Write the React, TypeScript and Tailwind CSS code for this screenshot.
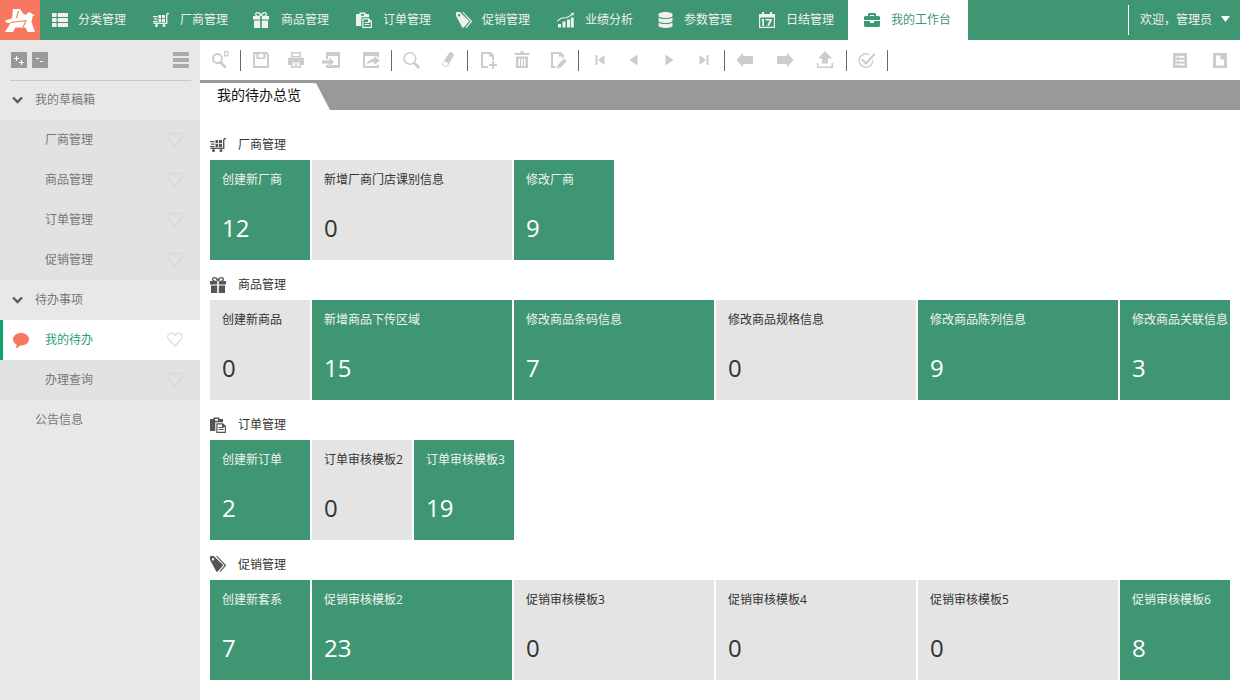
import React from "react";
import { FaThList, FaDatabase, FaBriefcase } from "react-icons/fa";

type IP = { className?: string };
const Cart = ({ className = "" }: IP) => (
  <svg viewBox="0 0 16 14" className={className} fill="currentColor">
    <path d="M0 3h4.500v1.300H0zM1 5.500h3.500v1.300H1zM0 8h4.500v1.300H0zM5.500 2h2.700v3.200H5.500zM9 2h3v3.200H9zM5.500 6h2.700v3.300H5.500zM9 6h3v3.300H9z" />
    <path d="M13 2.500 L13.800 0 H16 V1.200 H14.800 L14.400 2.800 V11 H0.500 V9.800 H13z" />
    <circle cx="3.500" cy="12.500" r="1.500" /><circle cx="11" cy="12.500" r="1.500" />
  </svg>
);
const Gift = ({ className = "" }: IP) => (
  <svg viewBox="0 0 16 16" className={className} fill="currentColor" fillRule="evenodd">
    <path d="M4.500 0C6 0 7.300.8 8 2.300 8.700.8 10 0 11.500 0 13 0 14 .9 14 2.200c0 .7-.3 1.300-.7 1.800H16v3.500H8.800V4H7.200v3.500H0V4h2.700C2.300 3.500 2 2.900 2 2.200 2 .9 3 0 4.500 0zm0 1.300c-.7 0-1.200.4-1.200.9 0 .9 1.300 1.600 3.500 1.700C6.500 2.400 5.600 1.300 4.500 1.300zm7 0c-1.100 0-2 1.100-2.300 2.600 2.200-.1 3.500-.8 3.500-1.700 0-.5-.5-.9-1.200-.9z" />
    <path d="M1 8.500h6.200V16H1zM8.800 8.500H15V16H8.800z" />
  </svg>
);
const Clip = ({ className = "" }: IP) => (
  <svg viewBox="0 0 16 16" className={className} fill="currentColor" fillRule="evenodd">
    <path d="M0 2h3.500V.5h6V2H13v3.300H5.300V14H0zM5 2v1.800h3V2z" />
    <path d="M6.300 6.300H13l3 3V16H6.300zM7.500 7.500v7.300h7.300v-4.700H12V7.500zM8.500 10h5v1h-5zM8.500 12h5v1h-5z" />
  </svg>
);
const Tag = ({ className = "" }: IP) => (
  <svg viewBox="0 0 16 17" className={className} fill="currentColor" fillRule="evenodd">
    <path d="M0 3.500V1.200C0 .5.500 0 1.200 0h2.500l9 8.500c.4.400.4 1 0 1.400l-5 5.500c-.4.400-1 .4-1.400 0L.4 4.600C.1 4.300 0 3.900 0 3.500zM3 2a1.200 1.200 0 1 0 0 2.400A1.200 1.200 0 0 0 3 2z" />
    <path d="M6 0h1.200l8.500 8.700c.4.400.4 1 0 1.400L10.500 16l-.9-.8 5-5.600z" />
  </svg>
);
const Chart = ({ className = "" }: IP) => (
  <svg viewBox="0 0 17 15" className={className} fill="currentColor">
    <path d="M1 11.500h3V15H1zM5.500 9h3v6h-3zM10 7h3v8h-3zM13.800 5h3v10h-3z" />
    <path d="M0 8 Q5 3.500 8 5 Q11 4 14.500 1.800 L13.600 .8 L17 0 L16.400 3.200 L15.500 2.500 Q11 5.600 8 6 Q5 5 .6 9z" />
  </svg>
);
const Cal = ({ className = "" }: IP) => (
  <svg viewBox="0 0 16 16" className={className}>
    <path d="M.6 2.500h14.800v12.900H.6z" fill="none" stroke="currentColor" strokeWidth="1.200" />
    <path d="M.6 3h14.800v2.500H.6zM3 0h2v4H3zM11 0h2v4h-2z" fill="currentColor" />
    <path d="M3 7h2v7H3.300V8.600H2.300zM6.500 7h6.200v1.400L10 14H8.100l2.600-5.400H6.500z" fill="currentColor" />
  </svg>
);

const nav = [
  { t: "分类管理", I: FaThList, c: "w-4 h-4", p: "pl-[12px]", s: "w-[26px]" },
  { t: "厂商管理", I: Cart, c: "w-4 h-[14px]", p: "pl-[12px]", s: "w-[27px]" },
  { t: "商品管理", I: Gift, c: "w-4 h-4", p: "pl-[11px]", s: "w-[28px]" },
  { t: "订单管理", I: Clip, c: "w-4 h-4", p: "pl-[13px]", s: "w-[27px]" },
  { t: "促销管理", I: Tag, c: "w-4 h-[17px]", p: "pl-[12px]", s: "w-[26px]" },
  { t: "业绩分析", I: Chart, c: "w-[17px] h-4", p: "pl-[12px]", s: "w-[28px]" },
  { t: "参数管理", I: FaDatabase, c: "w-[15px] h-4", p: "pl-[12px]", s: "w-[26px]" },
  { t: "日结管理", I: Cal, c: "w-4 h-4", p: "pl-[12px]", s: "w-[27px]" },
];

const Ic = ({ d }: { d: string }) => (
  <svg viewBox="0 0 20 20" className="w-5 h-5 shrink-0" fill="#cccccc" fillRule="evenodd"><path d={d} /></svg>
);
const paths = {
  key: "M7.500 3a5.500 5.500 0 1 0 2.400 10.400l4.700 5 1.900-1.900-4.700-4.900A5.500 5.500 0 0 0 7.500 3zm0 2a3.500 3.500 0 1 1 0 7 3.500 3.500 0 0 1 0-7zM14 1h4.500v5.500H14zM15.200 2.200v3.100h2.100V2.200z",
  save: "M2 2h14l2 2.500V18H2zM4 4v12h12V5.500L15 4h-.500v5h-9V4zM7.500 4v3.500H12.500V4z",
  print: "M5 2h10v5H5zM6.500 3.500V6h7V3.500zM3.500 7.500h13c1 0 1.500.6 1.500 1.500v6h-3v3H5v-3H2V9c0-.9.5-1.500 1.500-1.500zM6.500 12.500V16.500h7V12.500zM8 13.500h4v1H8zM8 15h4v.8H8z",
  inp: "M5 2h14v16H5v-3h12V6H7v3H5zM1 10.500h7V7.500l5 4.500-5 4.500v-3H1z",
  out: "M2 2h16v5h-2V6H4v10h12v-1h2v3H2zM6 15c0-3.500 3-6 7-6V6l6 4.500-6 4.500v-3c-3 0-5 .6-7 3z",
  search: "M8 2a6.500 6.500 0 1 0 3.300 12l5 5 2-2-5-5A6.500 6.500 0 0 0 8 2zm0 1.500a5 5 0 1 1 0 10 5 5 0 0 1 0-10z",
  erase: "M12.500 2.200c.6-.4 1.300-.3 1.800 0l2 1.500c.7.500.8 1.300.5 1.900l-5.600 10c-.5.900-1.500 1.500-2.600 1.200L6.500 16c-1.100-.5-1.500-1.700-1-2.800zM7.300 11l-1 2.400c-.3.800 0 1.500.6 1.800l1.700.8c.7.200 1.300 0 1.700-.7l1-1.800z",
  newd: "M3 2h10l3 3v5h-2V6.500h-3V4H5v12h5v2H3zM14 11h2v3h3v2h-3v3h-2v-3h-3v-2h3z",
  trash: "M8 1.500h4V3h5.500v2H2.500V3H8zM4 6.500h12V18H4zM6.500 8.500v7.500h1.500V8.500zM9.300 8.500v7.500h1.500V8.500zM12 8.500v7.500h1.500V8.500z",
  edit: "M3 2h10l3 3v2.500h-2V6.500h-3V4H5v12h2.500v2H3zM16 8.500l2.800 2.800-6.800 6.700-3.500.8.800-3.500zM9.800 16l-.2 1.300 1.400-.4z",
  first: "M5.500 5h2v10h-2zM8 10l6.500-5v10z",
  prev: "M5.500 10l8-5.500v11z",
  next: "M14.500 10l-8-5.500v11z",
  last: "M14.500 5h-2v10h2zM12 10L5.500 5v10z",
  left: "M1.500 10L8 2.500V6H18v8H8v3.500z",
  right: "M18.500 10L12 2.500V6H2v8h10v3.500z",
  up: "M10 1l7 7.500h-4v5H7v-5H3zM2 13h1.500v3.500h13V13H18v5H2z",
  check: "M9 3a7.500 7.500 0 1 0 7.500 7.500h-1.500A6 6 0 1 1 9 4.500c1 0 1.800.2 2.500.6l1-1.200A7.500 7.500 0 0 0 9 3zM5.500 8.500L9 12l8-9 1.500 1.500L9 15 4 10z",
  list: "M3 3h14v15H3zM5.500 6v1.800h1.800V6zM8.500 6v1.800h6V6zM5.500 9.800v1.800h1.800V9.800zM8.500 9.800v1.800h6V9.800zM5.500 13.500v1.800h1.800v-1.800zM8.500 13.500v1.800h6v-1.800z",
  doc: "M3 3h14v15H3zM6 5.500V15.500h8V9.500h-3.500V5.500z",
};

const Sep = ({ c }: { c: string }) => <span className={`w-px h-[21px] bg-[#666] shrink-0 ${c}`} />;

const Heart = () => (
  <svg viewBox="0 0 16 15" className="w-4 h-[15px] -mt-[1px]" fill="none" stroke="#d6d6d6" strokeWidth="1.100">
    <path d="M8 14 L1.700 7.500 C-.5 5 1 1 4.300 1 C6 1 7.300 2 8 3.200 C8.700 2 10 1 11.700 1 C15 1 16.500 5 14.300 7.500 Z" />
  </svg>
);

const SubRow = ({ t }: { t: string }) => (
  <div className="h-10 flex items-center justify-between pl-[45px] pr-[17px] bg-[#e2e2e2] text-[#777]">
    <span className="-mt-[1px]">{t}</span><Heart />
  </div>
);
const Chev = () => (
  <svg viewBox="0 0 11 8" className="w-[11px] h-2" fill="none" stroke="#5c5c5c" strokeWidth="2.400"><path d="M1 1.500l4.500 4.500L10 1.500" /></svg>
);
const GroupRow = ({ t, chev = true }: { t: string; chev?: boolean }) => (
  <div className="h-10 flex items-center pl-[12px] text-[#777]">
    <span className="w-[23px] flex">{chev && <Chev />}</span>
    <span>{t}</span>
  </div>
);

type Tile = [string, number, boolean, string];
const sections: { t: string; I: React.FC<IP>; c: string; tiles: Tile[] }[] = [
  { t: "厂商管理", I: Cart, c: "w-4 h-[14px]", tiles: [
    ["创建新厂商", 12, true, "w-[100px]"],
    ["新增厂商门店课别信息", 0, false, "w-[200px]"],
    ["修改厂商", 9, true, "w-[100px]"],
  ] },
  { t: "商品管理", I: Gift, c: "w-4 h-4", tiles: [
    ["创建新商品", 0, false, "w-[100px]"],
    ["新增商品下传区域", 15, true, "w-[200px]"],
    ["修改商品条码信息", 7, true, "w-[200px]"],
    ["修改商品规格信息", 0, false, "w-[200px]"],
    ["修改商品陈列信息", 9, true, "w-[200px]"],
    ["修改商品关联信息", 3, true, "w-[200px]"],
  ] },
  { t: "订单管理", I: Clip, c: "w-4 h-4", tiles: [
    ["创建新订单", 2, true, "w-[100px]"],
    ["订单审核模板2", 0, false, "w-[100px]"],
    ["订单审核模板3", 19, true, "w-[100px]"],
  ] },
  { t: "促销管理", I: Tag, c: "w-4 h-[17px]", tiles: [
    ["创建新套系", 7, true, "w-[100px]"],
    ["促销审核模板2", 23, true, "w-[200px]"],
    ["促销审核模板3", 0, false, "w-[200px]"],
    ["促销审核模板4", 0, false, "w-[200px]"],
    ["促销审核模板5", 0, false, "w-[200px]"],
    ["促销审核模板6", 8, true, "w-[200px]"],
  ] },
];

export default function App() {
  return (
    <div className="w-[1240px] h-[700px] overflow-hidden bg-white text-xs flex flex-col font-['Open_Sans','Noto_Sans_CJK_SC',sans-serif]">
      <header className="h-10 shrink-0 bg-[#3f9673] flex items-center text-[#f0f0f0]">
        <div className="w-10 h-10 bg-[#f8785f] shrink-0">
          <svg viewBox="0 0 40 40" className="w-10 h-10">
            <path fill="#fff" d="M13 9H20L23 13.500L26 15L28 12.500Q30.500 11.500 32 14L35 15L32.500 16.500L31.500 22L35 32H27.500L25.500 27.500H15.500L13 32H5L10.500 23H7L5 20.500L12 18.500z" />
            <path fill="none" stroke="#f8785f" strokeWidth="1.100" d="M10.500 22.500L26.500 20.500M18.500 11L16.500 18M26 21L23 27" />
          </svg>
        </div>
        {nav.map(({ t, I, c, p, s }) => (
          <div key={t} className={`w-[101px] h-10 flex items-center shrink-0 ${p}`}>
            <span className={`${s} shrink-0 flex`}><I className={c} /></span>
            <span>{t}</span>
          </div>
        ))}
        <div className="w-[120px] h-10 bg-white text-[#3f9673] flex items-center pl-4 shrink-0">
          <FaBriefcase className="w-4 h-4 mr-[11px]" />
          <span>我的工作台</span>
        </div>
        <div className="ml-auto h-[30px] w-[112px] border-l border-white flex items-center pl-[11px]">
          <span>欢迎，管理员</span>
          <svg viewBox="0 0 9 6" className="w-[9px] h-[6px] ml-[9px] -mt-[2px]" fill="#fff"><path d="M0 0h9L4.500 6z" /></svg>
        </div>
      </header>
      <div className="flex-1 flex min-h-0">
        <aside className="w-[200px] shrink-0 bg-[#e8e8e8] flex flex-col">
          <div className="h-10 shrink-0 flex items-center pl-[11px] pr-[11px]">
            <span className="w-4 h-4 bg-[#999]">
              <svg viewBox="0 0 16 16" className="w-4 h-4" fill="none" stroke="#fff" strokeWidth="1"><path d="M3 6.500h5M5.500 4v5M8 10.500h5M10.500 8v5" /></svg>
            </span>
            <span className="w-4 h-4 ml-[5px] bg-[#999]">
              <svg viewBox="0 0 16 16" className="w-4 h-4" fill="none" stroke="#fff" strokeWidth="1"><path d="M4 6.500h3M8 9.500h3" /></svg>
            </span>
            <span className="ml-auto w-4 flex flex-col gap-[2px]">
              <span className="h-1 bg-[#aaa]" /><span className="h-1 bg-[#aaa]" /><span className="h-1 bg-[#aaa]" />
            </span>
          </div>
          <div className="ml-[10px] mr-[9px] h-px bg-[#c8c8c8] -mb-px" />
          <GroupRow t="我的草稿箱" />
          <SubRow t="厂商管理" /><SubRow t="商品管理" /><SubRow t="订单管理" /><SubRow t="促销管理" />
          <GroupRow t="待办事项" />
          <div className="h-10 flex items-center justify-between bg-white border-l-[3px] border-[#0fa36f] pl-[10px] pr-[17px]">
            <span className="flex items-center">
              <svg viewBox="0 0 16 15" className="w-4 h-[15px]" fill="#f8785f"><path d="M8 0c4.500 0 8 2.700 8 6.300s-3.500 6.300-8 6.300l-1-.1C6 13.800 4.500 14.800 2.500 15c.7-.8 1.100-2 1.100-3.300C1.500 10.600 0 8.600 0 6.300 0 2.700 3.500 0 8 0z" /></svg>
              <span className="ml-4 -mt-[1px] text-[#1ea277]">我的待办</span>
            </span>
            <Heart />
          </div>
          <SubRow t="办理查询" />
          <GroupRow t="公告信息" chev={false} />
        </aside>
        <main className="flex-1 min-w-0 flex flex-col">
          <div className="h-10 shrink-0 flex items-center">
            <span className="ml-[10px]"><Ic d={paths.key} /></span>
            <Sep c="ml-[10px]" />
            <span className="ml-[10px]"><Ic d={paths.save} /></span>
            <span className="ml-[15px]"><Ic d={paths.print} /></span>
            <span className="ml-[15px]"><Ic d={paths.inp} /></span>
            <span className="ml-[20px]"><Ic d={paths.out} /></span>
            <Sep c="ml-[10px]" />
            <span className="ml-[10px]"><Ic d={paths.search} /></span>
            <span className="ml-[15px]"><Ic d={paths.erase} /></span>
            <Sep c="ml-[10px]" />
            <span className="ml-[10px]"><Ic d={paths.newd} /></span>
            <span className="ml-[14px]"><Ic d={paths.trash} /></span>
            <span className="ml-[16px]"><Ic d={paths.edit} /></span>
            <Sep c="ml-[10px]" />
            <span className="ml-[11px]"><Ic d={paths.first} /></span>
            <span className="ml-[14px]"><Ic d={paths.prev} /></span>
            <span className="ml-[15px]"><Ic d={paths.next} /></span>
            <span className="ml-[15px]"><Ic d={paths.last} /></span>
            <Sep c="ml-[10px]" />
            <span className="ml-[10px]"><Ic d={paths.left} /></span>
            <span className="ml-[20px]"><Ic d={paths.right} /></span>
            <span className="ml-[20px]"><Ic d={paths.up} /></span>
            <Sep c="ml-[11px]" />
            <span className="ml-[10px]"><Ic d={paths.check} /></span>
            <Sep c="ml-[10px]" />
            <span className="ml-auto"><Ic d={paths.list} /></span>
            <span className="ml-[20px] mr-[10px]"><Ic d={paths.doc} /></span>
          </div>
          <div className="h-[30px] shrink-0 bg-[#999] flex items-end">
            <div className="relative h-[27px] w-[116px] bg-white rounded-tr-[3px] pl-[17px] text-sm text-[#111] leading-[24px]">
              我的待办总览
              <svg viewBox="0 0 15 27" className="absolute left-[115px] top-0 w-[15px] h-[27px]" fill="#fff"><path d="M0 0h1l14 27H0z" /></svg>
            </div>
          </div>
          <div className="flex-1 overflow-hidden pl-[10px] pr-[10px] pt-[20px] flex flex-col">
            {sections.map(({ t, I, c, tiles }) => (
              <section key={t} className="mb-[10px]">
                <div className="h-[30px] flex items-center text-[#333] pb-[1px]">
                  <span className="w-[28px] text-[#555] flex"><I className={c} /></span>
                  <span>{t}</span>
                </div>
                <div className="flex gap-[2px] overflow-hidden">
                  {tiles.map(([l, n, g, w]) => (
                    <div key={l} className={`${w} h-[100px] shrink-0 pl-3 pt-[11px] flex flex-col ${g ? "bg-[#3f9673] text-[#f2f2f2]" : "bg-[#e4e4e4] text-[#333]"}`}>
                      <span className="leading-[18px] whitespace-nowrap">{l}</span>
                      <span className={`mt-[19px] text-2xl leading-[40px] ${g ? "text-white" : "text-[#333]"}`}>{n}</span>
                    </div>
                  ))}
                </div>
              </section>
            ))}
          </div>
        </main>
      </div>
    </div>
  );
}
